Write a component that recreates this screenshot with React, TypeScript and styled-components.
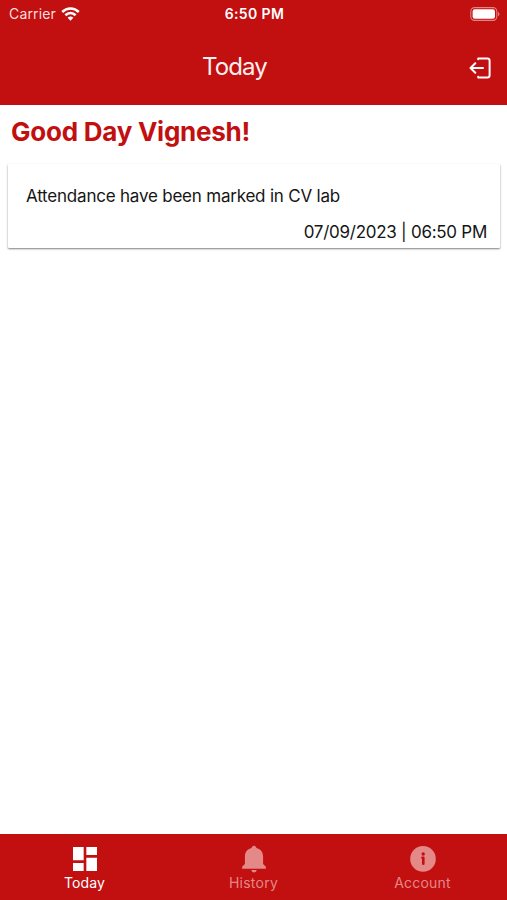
import React from "react";
import styled, { createGlobalStyle } from "styled-components";

const GlobalStyle = createGlobalStyle`
  * { box-sizing: border-box; }
  body { margin: 0; background: #fff; font-family: Inter, "Liberation Sans", sans-serif; }
`;

const RED = "#c20f0f";

const Screen = styled.div`
  height: 900px;
  display: flex;
  flex-direction: column;
  background: #fff;
`;

const Header = styled.header`
  height: 105px;
  flex: none;
  background: ${RED};
  color: #fff;
`;

const StatusBar = styled.div`
  height: 27px;
  display: grid;
  grid-template-columns: 1fr auto 1fr;
  align-items: center;
  padding: 0 7px 0 9px;
`;

const Carrier = styled.div`
  display: flex;
  align-items: center;
  gap: 5px;
  color: #fbdede;
`;

const Battery = styled.svg`
  justify-self: end;
`;

const Label = styled.span<{ $size: number; $weight?: number; $spacing?: number }>`
  font-size: ${(p) => p.$size}px;
  font-weight: ${(p) => p.$weight ?? 400};
  letter-spacing: ${(p) => p.$spacing ?? 0}px;
  line-height: 20px;
  white-space: nowrap;
`;

const TitleBar = styled.div`
  height: 78px;
  display: grid;
  grid-template-columns: 469px auto;
  align-items: center;
`;

const Title = styled.h1`
  margin: 0;
  padding-top: 1px;
  text-align: center;
  font-size: 24px;
  font-weight: 400;
  line-height: 30px;
  letter-spacing: -0.9px;
  color: #fff0f0;
`;

const LogoutButton = styled.button`
  display: flex;
  padding: 4px 0 0;
  border: 0;
  background: none;
  color: #fff;
`;

const Content = styled.main`
  flex: 1;
  padding: 10px 7px 0 8px;
`;

const Greeting = styled.h2`
  margin: 0 0 15px 3px;
  font-size: 26px;
  line-height: 34px;
  font-weight: 700;
  letter-spacing: -0.25px;
  color: ${RED};
`;

const Card = styled.article`
  height: 84px;
  display: flex;
  flex-direction: column;
  justify-content: space-between;
  padding: 22px 13px 6px 18px;
  border-radius: 1px;
  background: #fff;
  color: #151515;
  box-shadow: 0 1px 2px rgba(0, 0, 0, 0.5);
`;

const Timestamp = styled.div`
  display: flex;
  justify-content: flex-end;
`;

const TabBar = styled.nav`
  height: 66px;
  flex: none;
  display: grid;
  grid-template-columns: repeat(3, 1fr);
  background: ${RED};
`;

const Tab = styled.a<{ $active?: boolean }>`
  display: flex;
  flex-direction: column;
  align-items: center;
  padding-top: 9px;
  color: ${(p) => (p.$active ? "#fff" : "#e58888")};

  span { margin-top: -2px; }
  svg { display: block; }
`;

const WifiIcon = () => (
  <svg width="19" height="14" viewBox="0 0 19 14" fill="none" stroke="#fff" strokeWidth="2.6">
    <path d="M1.2 5C6 .4 13 .4 17.8 5" />
    <path d="M4.4 8.3C7.4 5.4 11.6 5.4 14.6 8.3" />
    <path d="M9.5 13.8 6.6 10.8Q9.5 8.3 12.4 10.8Z" fill="#fff" stroke="none" />
  </svg>
);

const BatteryIcon = () => (
  <Battery width="31" height="14" viewBox="0 0 31 14">
    <rect x="1.8" y=".6" width="26" height="12.8" rx="3.8" fill="none" stroke="#e38383" strokeWidth="1.1" />
    <rect x="3.6" y="2.3" width="22.4" height="9.4" rx="2.2" fill="#fff" />
    <path d="M29 4.7Q32 7 29 9.3Z" fill="#e38383" />
  </Battery>
);

const LogoutIcon = () => (
  <svg width="24" height="24" viewBox="0 0 24 24" fill="none" stroke="currentColor" strokeWidth="2" strokeLinecap="round" strokeLinejoin="round">
    <path d="M9.2 3.2V2.5H18.3Q20.6 2.5 20.6 4.8V19.2Q20.6 21.5 18.3 21.5H9.2V20.8" />
    <path d="M14 12H1.8M6.3 7.2 1.5 12l4.8 4.8" />
  </svg>
);

const DashboardIcon = () => (
  <svg width="32" height="32" viewBox="0 0 24 24" fill="currentColor">
    <path d="M3 13h8V3H3v10zm0 8h8v-6H3v6zm10 0h8V11h-8v10zm0-18v6h8V3h-8z" />
  </svg>
);

const BellIcon = () => (
  <svg width="32" height="32" viewBox="0 0 32 32" fill="currentColor">
    <path d="M16 2.8c1.3 0 2.2 1 2.4 2.1 4.4 1 6.7 4.4 6.7 8.8V21l2.8 2.7v2.1H4.1v-2.1L6.9 21v-7.3c0-4.4 2.3-7.8 6.7-8.8.2-1.1 1.1-2.1 2.4-2.1Z" />
    <path d="M13.4 27h5.2c0 1.4-1.2 2.4-2.6 2.4s-2.6-1-2.6-2.4Z" />
  </svg>
);

const InfoIcon = () => (
  <svg width="32" height="32" viewBox="0 0 32 32">
    <circle cx="16" cy="15.9" r="12.8" fill="currentColor" />
    <circle cx="16.2" cy="11" r="1.7" fill={RED} />
    <path d="M15.5 14.8h.8v6" fill="none" stroke={RED} strokeWidth="2.6" strokeLinecap="round" strokeLinejoin="round" />
  </svg>
);

export default function App() {
  return (
    <>
      <GlobalStyle />
      <Screen>
        <Header>
          <StatusBar>
            <Carrier>
              <Label $size={14} $spacing={0.15}>Carrier</Label>
              <WifiIcon />
            </Carrier>
            <Label $size={14} $weight={600} $spacing={0.4}>6:50 PM</Label>
            <BatteryIcon />
          </StatusBar>
          <TitleBar>
            <Title>Today</Title>
            <LogoutButton aria-label="Log out"><LogoutIcon /></LogoutButton>
          </TitleBar>
        </Header>
        <Content>
          <Greeting>Good Day Vignesh!</Greeting>
          <Card>
            <Label $size={17} $spacing={-0.21}>Attendance have been marked in CV lab</Label>
            <Timestamp>
              <Label $size={17} $spacing={-0.27}>07/09/2023 | 06:50 PM</Label>
            </Timestamp>
          </Card>
        </Content>
        <TabBar>
          <Tab $active>
            <DashboardIcon />
            <Label $size={14} $spacing={0.15}>Today</Label>
          </Tab>
          <Tab>
            <BellIcon />
            <Label $size={14} $spacing={0.25}>History</Label>
          </Tab>
          <Tab>
            <InfoIcon />
            <Label $size={14} $spacing={0.2}>Account</Label>
          </Tab>
        </TabBar>
      </Screen>
    </>
  );
}
